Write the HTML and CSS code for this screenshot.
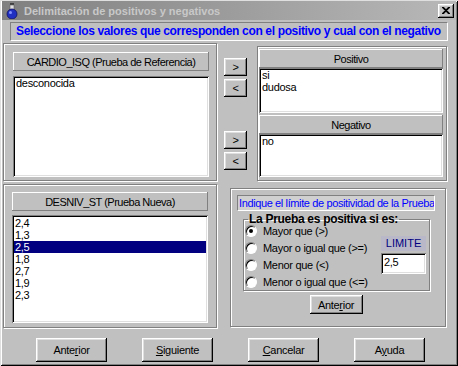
FILE: index.html
```html
<!DOCTYPE html>
<html>
<head>
    <meta charset="utf-8">
    <title>Delimitación de positivos y negativos</title>
    <link rel="stylesheet" href="styles.css">
</head>
<body>
    <div class="window">
        <div class="titlebar">
            <svg class="app-icon" width="14" height="16" viewBox="0 0 14 16">
                <rect x="5" y="0" width="4" height="2" fill="#404040"/>
                <rect x="5" y="2" width="4" height="5" fill="#e0e0e0" stroke="#606060" stroke-width="0.6"/>
                <circle cx="7" cy="11" r="5" fill="#2030c0" stroke="#101060" stroke-width="0.8"/>
                <circle cx="5.5" cy="9.5" r="1.5" fill="#8090ff"/>
            </svg>
            <span class="title">Delimitación de positivos y negativos</span>
            <span class="close-btn">
                <svg width="8" height="7" viewBox="0 0 8 7">
                    <path d="M0 0 L7 7 M1 0 L8 7 M7 0 L0 7 M8 0 L1 7" stroke="#000" stroke-width="1.2"/>
                </svg>
            </span>
        </div>

        <div class="prompt">Seleccione los valores que corresponden con el positivo y cual con el negativo</div>

        <div class="top-row">
            <!-- source values -->
            <div class="frame source-frame">
                <div class="col-head">CARDIO_ISQ (Prueba de Referencia)</div>
                <div class="listbox source-list">
                    <div class="item">desconocida</div>
                </div>
            </div>

            <div class="arrows">
                <div class="arrow-pair">
                    <button class="btn arrow">&gt;</button>
                    <button class="btn arrow">&lt;</button>
                </div>
                <div class="arrow-pair">
                    <button class="btn arrow">&gt;</button>
                    <button class="btn arrow">&lt;</button>
                </div>
            </div>

            <!-- positive / negative targets -->
            <div class="frame target-frame">
                <div class="col-head">Positivo</div>
                <div class="listbox pos-list">
                    <div class="item">si</div>
                    <div class="item">dudosa</div>
                </div>
                <div class="col-head">Negativo</div>
                <div class="listbox neg-list">
                    <div class="item">no</div>
                </div>
            </div>
        </div>

        <div class="bottom-row">
            <div class="frame values-frame">
                <div class="col-head">DESNIV_ST (Prueba Nueva)</div>
                <div class="listbox values-list">
                    <div class="item">2,4</div>
                    <div class="item">1,3</div>
                    <div class="item selected">2,5</div>
                    <div class="item">1,8</div>
                    <div class="item">2,7</div>
                    <div class="item">1,9</div>
                    <div class="item">2,3</div>
                </div>
            </div>

            <div class="frame limit-frame">
                <div class="limit-note">Indique el límite de positividad de la Prueba</div>
                <fieldset class="rule-group">
                    <legend>La Prueba es positiva si es:</legend>
                    <div class="rule-body">
                        <div class="options">
                            <div class="option"><span class="radio checked"></span>Mayor que (&gt;)</div>
                            <div class="option"><span class="radio"></span>Mayor o igual que (&gt;=)</div>
                            <div class="option"><span class="radio"></span>Menor que (&lt;)</div>
                            <div class="option"><span class="radio"></span>Menor o igual que (&lt;=)</div>
                        </div>
                        <div class="limit-box">
                            <div class="limit-label">LIMITE</div>
                            <div class="limit-input">2,5</div>
                        </div>
                    </div>
                </fieldset>
                <button class="btn small-btn">Ante<u>r</u>ior</button>
            </div>
        </div>

        <div class="actions">
            <button class="btn action">Ante<u>r</u>ior</button>
            <button class="btn action"><u>S</u>iguiente</button>
            <button class="btn action"><u>C</u>ancelar</button>
            <button class="btn action">A<u>y</u>uda</button>
        </div>
    </div>
</body>
</html>
```

FILE: styles.css
```css
body {
    margin: 0;
    font-family: "Liberation Sans", Arial, sans-serif;
    font-size: 11px;
    letter-spacing: -0.3px;
}

.window {
    width: 458px;
    height: 366px;
    box-sizing: border-box;
    padding: 1px 2px 2px 2px;
    background: #c0c0c0;
    box-shadow: inset 1px 1px #dfdfdf, inset -1px -1px #000, inset 2px 2px #fff, inset -2px -2px #808080;
    overflow: hidden;
}

/* title bar (inactive) */
.titlebar {
    height: 19px;
    display: flex;
    align-items: center;
    padding: 0 2px 0 3px;
    background: linear-gradient(to right, #808080, #b8b8b8);
    color: #c8c8c8;
}

.app-icon {
    margin-right: 5px;
}

.title {
    flex: 1;
    font-weight: bold;
    font-size: 11px;
    letter-spacing: 0;
}

.close-btn {
    width: 16px;
    height: 14px;
    box-sizing: border-box;
    display: flex;
    align-items: center;
    justify-content: center;
    background: #c0c0c0;
    box-shadow: inset -1px -1px #000, inset 1px 1px #fff, inset -2px -2px #808080, inset 2px 2px #dfdfdf;
}

.prompt {
    margin: 2px 8px 0 8px;
    height: 19px;
    box-sizing: border-box;
    padding: 1px 0 0 5px;
    border: 1px solid;
    border-color: #808080 #fff #fff #808080;
    color: #0000ff;
    font-weight: bold;
    font-size: 12px;
    letter-spacing: -0.35px;
    white-space: nowrap;
}

/* etched frame */
.frame {
    box-sizing: border-box;
    border: 1px solid #808080;
    box-shadow: inset 1px 1px #fff, 1px 1px #fff;
}

.top-row {
    display: flex;
    margin-top: 2px;
    height: 138px;
}

.source-frame {
    width: 214px;
    margin-left: 1px;
    padding: 8px 7px 3px 9px;
    display: flex;
    flex-direction: column;
    gap: 5px;
}

.col-head {
    height: 19px;
    flex: none;
    display: flex;
    align-items: center;
    justify-content: center;
    background: #c0c0c0;
    letter-spacing: -0.5px;
    box-shadow: inset -1px -1px #808080, inset 1px 1px #fff;
}

.listbox {
    background: #fff;
    box-sizing: border-box;
    padding: 1px 2px;
    box-shadow: inset 1px 1px #808080, inset -1px -1px #fff, inset 2px 2px #000, inset -2px -2px #dfdfdf;
    line-height: 12px;
}

.listbox .item {
    padding-left: 1px;
    height: 12px;
}

.source-list {
    flex: 1;
}

.arrows {
    width: 23px;
    margin: 15px 0 0 7px;
    display: flex;
    flex-direction: column;
    gap: 34px;
}

.arrow-pair {
    display: flex;
    flex-direction: column;
    gap: 3px;
}

.btn {
    font-family: inherit;
    font-size: 11px;
    letter-spacing: -0.3px;
    color: #000;
    background: #c0c0c0;
    border: none;
    padding: 0;
    box-shadow: inset -1px -1px #000, inset 1px 1px #fff, inset -2px -2px #808080, inset 2px 2px #dfdfdf;
}

.arrow {
    width: 23px;
    height: 18px;
}

.target-frame {
    width: 190px;
    margin: 3px 0 0 10px;
    height: 135px;
    padding: 2px 3px 3px 1px;
    display: flex;
    flex-direction: column;
}

.pos-list {
    height: 45px;
    margin-bottom: 2px;
}

.neg-list {
    flex: 1;
}

.bottom-row {
    display: flex;
    margin-top: 3px;
    height: 144px;
}

.values-frame {
    width: 214px;
    margin-left: 1px;
    padding: 7px 8px 4px 8px;
    display: flex;
    flex-direction: column;
    gap: 4px;
}

.values-list {
    flex: 1;
    padding-top: 2px;
}

.values-list .item.selected {
    background: #000080;
    color: #fff;
}

.limit-frame {
    width: 216px;
    height: 139px;
    margin: 4px 0 0 13px;
    padding: 6px 10px 0 6px;
    display: flex;
    flex-direction: column;
    align-items: center;
}

.limit-note {
    align-self: stretch;
    height: 16px;
    box-sizing: border-box;
    border: 1px solid;
    border-color: #808080 #fff #fff #808080;
    background: #d0d0d0;
    color: #0000ff;
    padding-left: 1px;
    line-height: 14px;
    font-size: 11px;
    letter-spacing: -0.38px;
    white-space: nowrap;
    overflow: hidden;
}

.rule-group {
    align-self: stretch;
    margin: 1px 5px 0 6px;
    padding: 0 3px 3px 1px;
    height: 79px;
    box-sizing: border-box;
    border: 1px solid #808080;
    box-shadow: inset 1px 1px #fff, 1px 1px #fff;
}

.rule-group legend {
    font-weight: bold;
    font-size: 12px;
    letter-spacing: -0.3px;
    padding: 0 1px;
    margin-left: 3px;
    line-height: 14px;
}

.rule-body {
    display: flex;
    justify-content: space-between;
}

.options {
    display: flex;
    flex-direction: column;
    gap: 4px;
    margin-top: -2px;
}

.option {
    display: flex;
    align-items: center;
    height: 13px;
}

.radio {
    width: 12px;
    height: 12px;
    box-sizing: border-box;
    border-radius: 50%;
    margin-right: 6px;
    background: #fff;
    border: 1px solid;
    border-color: #808080 #fff #fff #808080;
    box-shadow: inset 1px 1px #000;
    position: relative;
}

.radio.checked::after {
    content: "";
    position: absolute;
    left: 3px;
    top: 3px;
    width: 4px;
    height: 4px;
    border-radius: 50%;
    background: #000;
}

.limit-box {
    width: 45px;
    margin-top: 10px;
    display: flex;
    flex-direction: column;
    gap: 2px;
}

.limit-label {
    height: 15px;
    text-align: center;
    line-height: 15px;
    background: #b8b8c8;
    color: #000080;
    letter-spacing: 0;
}

.limit-input {
    height: 21px;
    box-sizing: border-box;
    background: #fff;
    padding: 3px 0 0 3px;
    box-shadow: inset 1px 1px #808080, inset -1px -1px #fff, inset 2px 2px #000, inset -2px -2px #dfdfdf;
}

.small-btn {
    margin-top: 4px;
    width: 53px;
    height: 19px;
}

.actions {
    display: flex;
    margin: 10px 0 0 34px;
    gap: 35px;
}

.action {
    width: 71px;
    height: 24px;
}
```
